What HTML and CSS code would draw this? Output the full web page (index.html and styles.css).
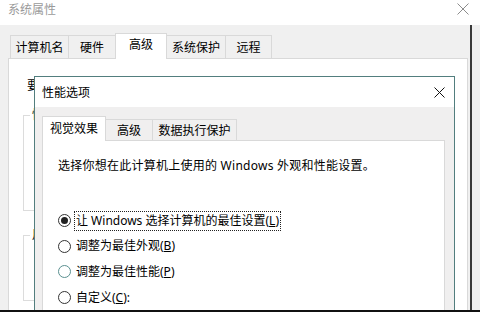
FILE: index.html
```html
<!DOCTYPE html>
<html lang="zh-CN">
<head>
    <meta charset="UTF-8">
    <title>系统属性 - 性能选项</title>
    <link rel="stylesheet" href="styles.css">
</head>
<body>

<div class="window">
    <div class="titlebar">
        <span class="title">系统属性</span>
        <svg class="close" width="12" height="12" viewBox="0 0 12 12">
            <path d="M0.5 0.5L11.5 11.5M11.5 0.5L0.5 11.5" stroke="#8c8c8c" stroke-width="1"/>
        </svg>
    </div>

    <div class="main">
        <div class="tabs">
            <div class="tab tab-name">计算机名</div>
            <div class="tab tab-hw">硬件</div>
            <div class="tab tab-adv active">高级</div>
            <div class="tab tab-protect">系统保护</div>
            <div class="tab tab-remote">远程</div>
        </div>

        <!-- mostly hidden behind the dialog -->
        <div class="outer-panel">
            <p class="admin-note">要</p>
            <fieldset class="group group-perf">
                <legend>性</legend>
            </fieldset>
            <fieldset class="group group-profile">
                <legend>用</legend>
            </fieldset>
        </div>

        <div class="dialog">
            <div class="dialog-titlebar">
                <span class="dialog-title">性能选项</span>
                <svg class="close" width="11" height="11" viewBox="0 0 11 11">
                    <path d="M0.5 0.5L10.5 10.5M10.5 0.5L0.5 10.5" stroke="#111" stroke-width="1"/>
                </svg>
            </div>

            <div class="dialog-tabs">
                <div class="dtab dtab-visual active">视觉效果</div>
                <div class="dtab dtab-adv">高级</div>
                <div class="dtab dtab-dep">数据执行保护</div>
            </div>

            <div class="dialog-panel">
                <p class="intro">选择你想在此计算机上使用的 Windows 外观和性能设置。</p>

                <div class="options">
                    <div class="option">
                        <span class="radio checked"></span>
                        <span class="option-label focused">让 Windows 选择计算机的最佳设置(<u>L</u>)</span>
                    </div>
                    <div class="option">
                        <span class="radio"></span>
                        <span class="option-label">调整为最佳外观(<u>B</u>)</span>
                    </div>
                    <div class="option">
                        <span class="radio hover"></span>
                        <span class="option-label">调整为最佳性能(<u>P</u>)</span>
                    </div>
                    <div class="option">
                        <span class="radio"></span>
                        <span class="option-label">自定义(<u>C</u>):</span>
                    </div>
                </div>
            </div>
        </div>
    </div>

    <div class="bottom-line"></div>
</div>

</body>
</html>
```

FILE: styles.css
```css
* {
    box-sizing: border-box;
}

html, body {
    margin: 0;
}

body {
    width: 480px;
    height: 312px;
    overflow: hidden;
    font-family: "Noto Sans", "Noto Sans CJK SC", sans-serif;
    font-size: 12px;
    color: #000;
    background: #f0f0f0;
}

.window {
    display: flex;
    flex-direction: column;
    height: 312px;
}

/* outer window: 系统属性 */

.titlebar {
    height: 25px;
    flex: none;
    background: #fff;
    display: flex;
    justify-content: space-between;
    align-items: flex-start;
    padding: 2px 11px 0 8px;
}

.title {
    line-height: 16px;
    color: #9a9a9a;
}

.titlebar .close {
    margin-top: 1px;
}

.main {
    flex: 1;
    position: relative;
    overflow: hidden;
    margin-right: 8px;
    border-right: 2px solid #3a3a3a;
}

.tabs {
    display: flex;
    align-items: flex-end;
    height: 34px;
    padding-left: 10px;
}

.tab {
    height: 24px;
    margin-left: -1px;
    border: 1px solid #d9d9d9;
    border-bottom: none;
    background: #f0f0f0;
    display: flex;
    align-items: center;
    justify-content: center;
    line-height: 16px;
}

.tab-name { width: 59px; margin-left: 0; }
.tab-hw { width: 48px; }
.tab-adv { width: 52px; }
.tab-protect { width: 60px; }
.tab-remote { width: 47px; }

.tab.active {
    height: 26px;
    padding-bottom: 3px;
    background: #fff;
    position: relative;
    z-index: 2;
}

.outer-panel {
    position: relative;
    z-index: 1;
    width: 460px;
    height: 260px;
    margin: -1px 0 0 8px;
    padding: 19px 0 0 14px;
    background: #fff;
    border: 1px solid #d9d9d9;
}

.admin-note {
    margin: 0 0 0 4px;
    line-height: 16px;
}

.group {
    margin: 13px 0 0 0;
    padding: 0;
    width: 420px;
    border: 1px solid #dcdcdc;
}

.group legend {
    margin-left: 6px;
    padding: 0 2px;
    line-height: 16px;
}

.group-perf {
    height: 104px;
}

.group-profile {
    height: 74px;
    margin-top: 16px;
}

/* dialog: 性能选项 */

.dialog {
    position: absolute;
    left: 34px;
    top: 51px;
    z-index: 3;
    width: 421px;
    height: 270px;
    display: flex;
    flex-direction: column;
    background: #f0efef;
    border: 1px solid #527e7e;
}

.dialog-titlebar {
    height: 30px;
    flex: none;
    background: #fff;
    display: flex;
    align-items: center;
    justify-content: space-between;
    padding: 1px 9px 0 7px;
}

.dialog-title {
    line-height: 16px;
}

.dialog-tabs {
    display: flex;
    align-items: flex-end;
    height: 34px;
    flex: none;
    padding-left: 7px;
}

.dtab {
    height: 22px;
    margin-left: -1px;
    border: 1px solid #d9d9d9;
    border-bottom: none;
    background: #f0efef;
    display: flex;
    align-items: center;
    justify-content: center;
    line-height: 16px;
}

.dtab-visual { width: 64px; margin-left: 0; }
.dtab-adv { width: 48px; }
.dtab-dep { width: 85px; }

.dtab.active {
    height: 25px;
    background: #fff;
    position: relative;
    z-index: 2;
}

.dialog-panel {
    position: relative;
    z-index: 1;
    flex: 1;
    width: 403px;
    margin: -1px 0 0 7px;
    padding: 17px 0 0 15px;
    background: #fff;
    border: 1px solid #d9d9d9;
}

.intro {
    margin: 0;
    line-height: 16px;
    letter-spacing: 0.25px;
}

.options {
    margin-top: 34px;
    display: flex;
    flex-direction: column;
}

.option {
    height: 25.6px;
    display: flex;
    align-items: center;
}

.radio {
    flex: none;
    width: 13px;
    height: 13px;
    border: 1px solid #333;
    border-radius: 50%;
    background: #fff;
    display: flex;
    align-items: center;
    justify-content: center;
}

.radio.hover {
    border-color: #5a9090;
}

.radio.checked::after {
    content: "";
    width: 7px;
    height: 7px;
    border-radius: 50%;
    background: #222;
}

.option-label {
    margin-left: 3px;
    padding: 2px 2px;
    line-height: 16px;
}

.option-label.focused {
    outline: 1px dotted #222;
    outline-offset: -1px;
}

.bottom-line {
    height: 2px;
    flex: none;
    background: #111;
}
```
